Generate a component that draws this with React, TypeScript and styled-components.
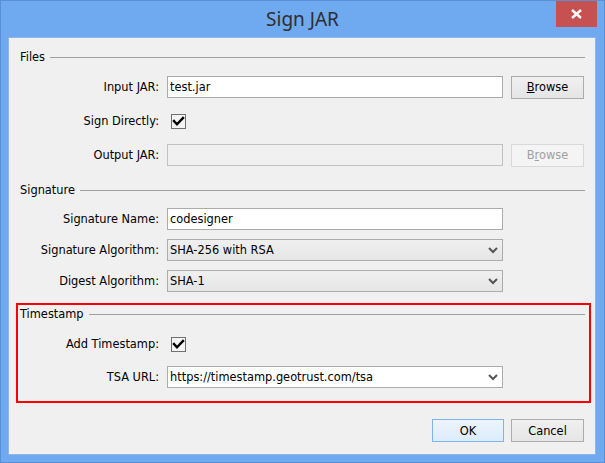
import React from "react";
import styled, { createGlobalStyle } from "styled-components";

const GlobalStyle = createGlobalStyle`
  html, body {
    margin: 0;
    padding: 0;
    background: #6fa9ef;
  }
  body {
    font-family: "DejaVu Sans", Verdana, sans-serif;
    font-size: 11.4px;
    color: #000;
  }
`;

const CheckMark = () => (
  <svg width="15" height="15" viewBox="0 0 15 15">
    <path d="M3 7 L6 10.3 L12 4" fill="none" stroke="#000" strokeWidth="2.4" strokeLinecap="square" />
  </svg>
);

const Chevron = () => (
  <svg width="10" height="7" viewBox="0 0 10 7">
    <path d="M1 1 L5 5 L9 1" fill="none" stroke="#555" strokeWidth="2" />
  </svg>
);

const CloseIcon = () => (
  <svg width="11" height="10" viewBox="0 0 11 10">
    <path d="M1 1 L10 9 M10 1 L1 9" stroke="#fff" strokeWidth="2.4" />
  </svg>
);

const App = () => {
  return (
    <>
      <GlobalStyle />
      <Window>
        <TitleBar>
          Sign JAR
          <CloseButton>
            <CloseIcon />
          </CloseButton>
        </TitleBar>
        <Client>
          {/* Files */}
          <Section $top={0}>
            <Header>
              <span>Files</span>
              <Rule />
            </Header>
            <Rows $headGap={11} $gap={12}>
              <Label>Input JAR:</Label>
              <TextField defaultValue="test.jar" />
              <Button>
                <u>B</u>rowse
              </Button>

              <Label>Sign Directly:</Label>
              <CheckBox>
                <CheckMark />
              </CheckBox>
              <span />

              <Label>Output JAR:</Label>
              <TextField disabled defaultValue="" />
              <Button disabled>
                B<u>r</u>owse
              </Button>
            </Rows>
          </Section>

          {/* Signature */}
          <Section $top={16}>
            <Header>
              <span>Signature</span>
              <Rule />
            </Header>
            <Rows $headGap={10} $gap={9}>
              <Label>Signature Name:</Label>
              <TextField defaultValue="codesigner" />
              <span />

              <Label>Signature Algorithm:</Label>
              <Combo>
                <span>SHA-256 with RSA</span>
                <Chevron />
              </Combo>
              <span />

              <Label>Digest Algorithm:</Label>
              <Combo>
                <span>SHA-1</span>
                <Chevron />
              </Combo>
              <span />
            </Rows>
          </Section>

          {/* Timestamp */}
          <Highlight>
            <Section $top={0}>
              <Header>
                <span>Timestamp</span>
                <Rule />
              </Header>
              <Rows $headGap={11} $gap={11}>
                <Label>Add Timestamp:</Label>
                <CheckBox>
                  <CheckMark />
                </CheckBox>
                <span />

                <Label>TSA URL:</Label>
                <Combo $editable>
                  <span>https://timestamp.geotrust.com/tsa</span>
                  <Chevron />
                </Combo>
                <span />
              </Rows>
            </Section>
          </Highlight>

          <Footer>
            <Button $primary $wide={72}>
              OK
            </Button>
            <Button>Cancel</Button>
          </Footer>
        </Client>
      </Window>
    </>
  );
};

export default App;

const Window = styled.div`
  position: relative;
  width: 605px;
  height: 463px;
  box-sizing: border-box;
  border: 1px solid #5a8fd8;
  background: #6fa9ef;
  display: flex;
  flex-direction: column;
`;

const TitleBar = styled.div`
  height: 36px;
  display: flex;
  align-items: center;
  justify-content: center;
  font-family: "Noto Sans", "Open Sans", sans-serif;
  font-size: 19px;
  color: #2e2e2e;
`;

const CloseButton = styled.div`
  position: absolute;
  top: 0;
  right: 7px;
  width: 41px;
  height: 26px;
  background: #c75050;
  display: flex;
  align-items: center;
  justify-content: center;
`;

const Client = styled.div`
  flex: 1;
  margin: 0 8px 7px 7px;
  border: 1px solid #8fb6ea;
  background: #f0f0f0;
  padding: 11px 10px 12px 11px;
  display: flex;
  flex-direction: column;
`;

const Section = styled.div<{ $top: number }>`
  margin-top: ${(p) => p.$top}px;
  display: flex;
  flex-direction: column;
`;

const Header = styled.div`
  height: 16px;
  display: flex;
  align-items: center;
  gap: 5px;
  line-height: 16px;
`;

const Rule = styled.div`
  flex: 1;
  height: 1px;
  background: #a0a0a0;
`;

const Rows = styled.div<{ $headGap: number; $gap: number }>`
  margin-top: ${(p) => p.$headGap}px;
  display: grid;
  grid-template-columns: 139px 336px 73px;
  grid-auto-rows: 22px;
  column-gap: 8px;
  row-gap: ${(p) => p.$gap}px;
  align-items: center;
`;

const Label = styled.label`
  text-align: right;
  white-space: nowrap;
  color: #000;
`;

const TextField = styled.input`
  height: 22px;
  width: 100%;
  box-sizing: border-box;
  margin: 0;
  padding: 0 2px;
  border: 1px solid #ababab;
  border-radius: 0;
  background: #fff;
  outline: none;
  font-family: "DejaVu Sans", Verdana, sans-serif;
  font-size: 11.4px;
  color: #000;

  &:disabled {
    background: #f0f0f0;
    border-color: #c2c2c2;
  }
`;

const Combo = styled.div<{ $editable?: boolean }>`
  height: 22px;
  box-sizing: border-box;
  border: 1px solid #acacac;
  background: ${(p) => (p.$editable ? "#fff" : "linear-gradient(#f0f0f0, #e5e5e5)")};
  padding: 0 4px 0 2px;
  display: flex;
  align-items: center;
  justify-content: space-between;
  white-space: nowrap;
`;

const CheckBox = styled.div`
  width: 15px;
  height: 15px;
  margin-left: 4px;
  box-sizing: border-box;
  border: 1px solid #707070;
  background: #f4f4f4;
  display: flex;
  align-items: center;
  justify-content: center;

  svg {
    flex: none;
  }
`;

const Button = styled.button<{ $primary?: boolean; $wide?: number }>`
  width: ${(p) => p.$wide ?? 73}px;
  height: 23px;
  margin: 0;
  padding: 0;
  box-sizing: border-box;
  border: 1px solid ${(p) => (p.$primary ? "#7eb4ea" : "#acacac")};
  border-radius: 0;
  background: ${(p) => (p.$primary ? "linear-gradient(#ecf4fc, #dcecfc)" : "linear-gradient(#f0f0f0, #e5e5e5)")};
  font-family: "DejaVu Sans", Verdana, sans-serif;
  font-size: 11.4px;
  color: #000;

  &:disabled {
    border-color: #d9d9d9;
    background: #f4f4f4;
    color: #a0a0a0;
  }
`;

const Highlight = styled.div`
  margin: 11px -6px 0 -4px;
  border: 2px solid #ff0000;
  padding: 1px 4px 13px 2px;
`;

const Footer = styled.div`
  margin-top: 16px;
  padding-right: 1px;
  display: flex;
  justify-content: flex-end;
  gap: 7px;
`;
